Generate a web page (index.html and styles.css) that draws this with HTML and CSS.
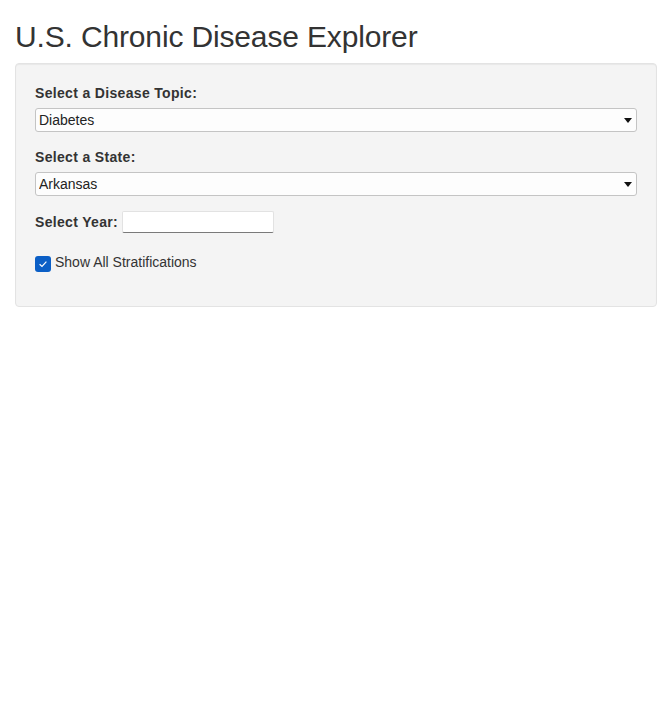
FILE: index.html
```html
<!DOCTYPE html>
<html lang="en">
<head>
<meta charset="utf-8">
<title>U.S. Chronic Disease Explorer</title>
<link rel="stylesheet" href="styles.css">
</head>
<body>
<div class="container">
  <h2 class="title">U.S. Chronic Disease Explorer</h2>
  <div class="well">
    <div class="form-group">
      <label class="control-label" for="topic">Select a Disease Topic:</label>
      <div class="select-wrap">
        <select id="topic" class="sel">
          <option selected>Diabetes</option>
          <option>Cancer</option>
          <option>Asthma</option>
        </select>
      </div>
    </div>
    <div class="form-group">
      <label class="control-label" for="state">Select a State:</label>
      <div class="select-wrap">
        <select id="state" class="sel">
          <option>Alabama</option>
          <option>Alaska</option>
          <option selected>Arkansas</option>
        </select>
      </div>
    </div>
    <div class="form-group year-row">
      <label class="control-label inline" for="year">Select Year:</label>
      <input id="year" class="year-input" type="text">
    </div>
    <div class="checkbox-row">
      <label class="check-label">
        <span class="box">
          <svg width="10" height="10" viewBox="0 0 10 10"><path d="M1.6 5.2 L4 7.4 L8.4 2.6" fill="none" stroke="#fff" stroke-width="1.2"/></svg>
        </span>
        <span class="check-text">Show All Stratifications</span>
      </label>
    </div>
  </div>
</div>
</body>
</html>
```

FILE: styles.css
```css
html, body {
  margin: 0;
  padding: 0;
  background: #fff;
}
body {
  font-family: "Liberation Sans", Arial, Helvetica, sans-serif;
  font-size: 14px;
  line-height: 20px;
  color: #333;
}
.container {
  padding: 0 15px;
}
.title {
  margin: 20px 0 10px;
  font-size: 30px;
  font-weight: 400;
  line-height: 33px;
  color: #333;
  letter-spacing: -0.15px;
}
.well {
  background: #f4f4f4;
  border: 1px solid #e3e3e3;
  border-radius: 4px;
  box-shadow: inset 0 1px 1px rgba(0,0,0,.05);
  padding: 19px 19px 18px 19px;
  margin-bottom: 20px;
}
.form-group {
  margin-bottom: 15px;
}
.control-label {
  display: inline-block;
  font-weight: 700;
  margin-bottom: 5px;
  letter-spacing: 0.33px;
}
.control-label.inline {
  margin-bottom: 0;
}
.select-wrap {
  position: relative;
}
.select-wrap::after {
  content: "";
  position: absolute;
  right: 5px;
  top: 10px;
  width: 0;
  height: 0;
  border-left: 4px solid transparent;
  border-right: 4px solid transparent;
  border-top: 5px solid #111;
  pointer-events: none;
}
.sel {
  -webkit-appearance: none;
  appearance: none;
  display: block;
  width: 100%;
  height: 24px;
  margin: 0;
  padding: 0 16px 0 3px;
  font-family: "Liberation Sans", Arial, sans-serif;
  font-size: 14px;
  color: #222;
  background: #fdfdfd;
  border: 1px solid #c4c4c4;
  border-radius: 3px;
  box-sizing: border-box;
}
.year-row {
  display: flex;
  align-items: center;
  gap: 4px;
  margin-bottom: 20px;
}
.year-input {
  width: 152px;
  height: 22px;
  box-sizing: border-box;
  margin: 0;
  padding: 1px 2px;
  background: #fff;
  border: 1px solid #e2e2e2;
  border-bottom: 1px solid #7a7a7a;
  border-radius: 2px;
  font-family: "Liberation Sans", Arial, sans-serif;
  font-size: 14px;
}
.checkbox-row {
  margin-bottom: 15px;
}
.check-label {
  display: flex;
  align-items: center;
  gap: 4px;
  height: 20px;
}
.box {
  display: flex;
  align-items: center;
  justify-content: center;
  width: 16px;
  height: 16px;
  border-radius: 3px;
  background: #0b5fc6;
  margin-top: 2px;
}
.box svg {
  display: block;
}
.check-text {
  font-weight: 400;
  color: #333;
  position: relative;
  top: -1px;
}
```
